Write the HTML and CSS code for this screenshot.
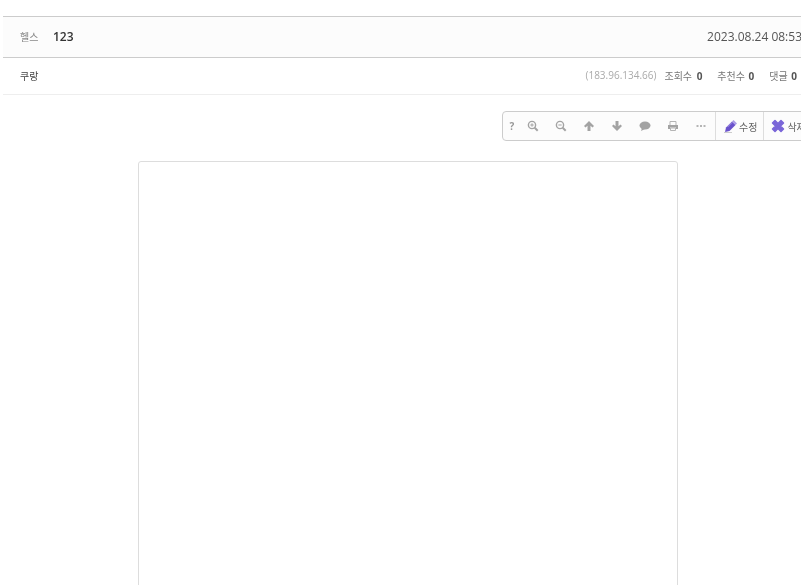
FILE: index.html
```html
<!DOCTYPE html>
<html lang="ko">
<head>
    <meta charset="UTF-8">
    <title>헬스 123</title>
    <link rel="stylesheet" href="styles.css">
</head>
<body>
    <div class="view-wrap">
        <div class="view-head">
            <span class="category">헬스</span>
            <span class="subject">123</span>
            <span class="date">2023.08.24 08:53</span>
        </div>
        <div class="view-info">
            <span class="nick">쿠랑</span>
            <span class="ip">(183.96.134.66)</span>
            <span class="stat first">조회수 <b>0</b></span>
            <span class="stat">추천수 <b>0</b></span>
            <span class="stat">댓글 <b>0</b></span>
        </div>
        <div class="toolbar-row">
            <div class="toolbar">
                <span class="tool help">?</span>
                <span class="tool">
                    <svg width="12" height="12" viewBox="0 0 12 12"><circle cx="5" cy="5" r="3.6" fill="none" stroke="#a3a3a3" stroke-width="1.4"/><path d="M7.700 7.700l3 3" stroke="#a3a3a3" stroke-width="2"/><path d="M3.300 5h3.400M5 3.300v3.400" stroke="#a3a3a3"/></svg>
                </span>
                <span class="tool">
                    <svg width="12" height="12" viewBox="0 0 12 12"><circle cx="5" cy="5" r="3.6" fill="none" stroke="#a3a3a3" stroke-width="1.4"/><path d="M7.700 7.700l3 3" stroke="#a3a3a3" stroke-width="2"/><path d="M3.300 5h3.400" stroke="#a3a3a3"/></svg>
                </span>
                <span class="tool">
                    <svg width="12" height="12" viewBox="0 0 12 12"><path d="M6 1l5 5-1.500 1.500L7.500 5.700V11h-3V5.700L2.500 7.500 1 6z" fill="#a3a3a3"/></svg>
                </span>
                <span class="tool">
                    <svg width="12" height="12" viewBox="0 0 12 12"><path d="M6 11L1 6l1.500-1.500 2 1.800V1h3v5.300l2-1.800L11 6z" fill="#a3a3a3"/></svg>
                </span>
                <span class="tool">
                    <svg width="12" height="12" viewBox="0 0 12 12"><ellipse cx="6" cy="5.500" rx="5.500" ry="4" fill="#a3a3a3"/><path d="M3 8l-1 3 4-2z" fill="#a3a3a3"/></svg>
                </span>
                <span class="tool">
                    <svg width="12" height="12" viewBox="0 0 12 12"><path d="M3 5V1.500h6V5" fill="none" stroke="#b5b5b5"/><path d="M1 5h10v4H9V7.500H3V9H1z" fill="#a3a3a3"/><path d="M3.500 8h5v2.500h-5z" fill="none" stroke="#b5b5b5"/></svg>
                </span>
                <span class="tool">
                    <svg width="12" height="12" viewBox="0 0 12 12"><path d="M1.500 5h2v2h-2zM5 5h2v2H5zM8.500 5h2v2h-2z" fill="#b5b5b5"/></svg>
                </span>
                <span class="action edit">
                    <svg width="13" height="13" viewBox="0 0 13 13"><path d="M2 7.500L8 1.500l3.500 3.500-6 6-4.500 1z" fill="#6a52cc"/><path d="M8 1.500l1.500-1.500 3.500 3.500L11.500 5z" fill="#a99ae6"/><path d="M3.500 7l4.500-4.500" stroke="#a99ae6"/><path d="M0 12.500h8" stroke="#ccc"/></svg>
                    수정
                </span>
                <span class="action del">
                    <svg width="14" height="14" viewBox="0 0 14 14"><path d="M1.500 4l2.500-2.500 3 3 3-3L12.500 4l-3 3 3 3-2.500 2.500-3-3-3 3L1.500 10l3-3z" fill="#7a66d8" stroke="#7a66d8" stroke-width="1.500" stroke-linejoin="round"/></svg>
                    삭제
                </span>
            </div>
        </div>
        <div class="content-box"></div>
    </div>
</body>
</html>
```

FILE: styles.css
```css
/* General Body Styling */
html,
body {
    height: 100%;
    overflow: hidden;
}

body {
    margin: 0;
    background-color: #fff;
    color: #333;
    font-family: 'Open Sans', 'Noto Sans CJK KR', sans-serif;
    font-size: 10px;
}

.view-wrap {
    width: 860px;
    margin: 16px 0 0 3px;
    will-change: transform;
}

/* Title Row */
.view-head {
    display: flex;
    align-items: center;
    height: 38px;
    padding: 0 61px 2px 16px;
    background-color: #fcfcfc;
    border-top: 1px solid #ccc;
    border-bottom: 1px solid #ccc;
}

.category {
    width: 33px;
    padding-left: 1px;
    color: #888;
}

.subject {
    font-size: 12px;
    font-weight: 600;
    color: #333;
}

.date {
    margin-left: auto;
    font-size: 12px;
    color: #555;
}

/* Writer Row */
.view-info {
    display: flex;
    align-items: center;
    height: 34px;
    padding: 0 66px 2px 17px;
    border-bottom: 1px solid #eee;
}

.nick {
    color: #444;
}

.ip {
    margin-left: auto;
    color: #aaa;
}

.stat {
    margin-left: 15px;
    color: #777;
}

.stat.first {
    margin-left: 8px;
}

.stat b {
    margin-left: 1px;
    color: #555;
}

.stat.first b {
    margin-left: 2px;
}

/* Toolbar */
.toolbar-row {
    display: flex;
    padding-top: 16px;
}

.toolbar {
    display: flex;
    align-items: center;
    height: 28px;
    margin-left: 499px;
    background-color: #fcfcfc;
    border: 1px solid #ccc;
    border-radius: 4px;
    color: #666;
}

.tool {
    display: flex;
    justify-content: center;
    align-items: center;
    width: 28px;
    height: 28px;
}

.tool.help {
    box-sizing: border-box;
    width: 16px;
    padding-left: 2px;
    font-weight: bold;
    color: #999;
}

.action {
    display: flex;
    align-items: center;
    gap: 2px;
    height: 28px;
    padding: 0 6px 0 8px;
    border-left: 1px solid #ddd;
    white-space: nowrap;
}

.action.del {
    padding-left: 7px;
}

/* Content Box */
.content-box {
    width: 538px;
    height: 600px;
    margin: 20px 0 0 135px;
    border: 1px solid #ddd;
    border-radius: 3px;
}
```
